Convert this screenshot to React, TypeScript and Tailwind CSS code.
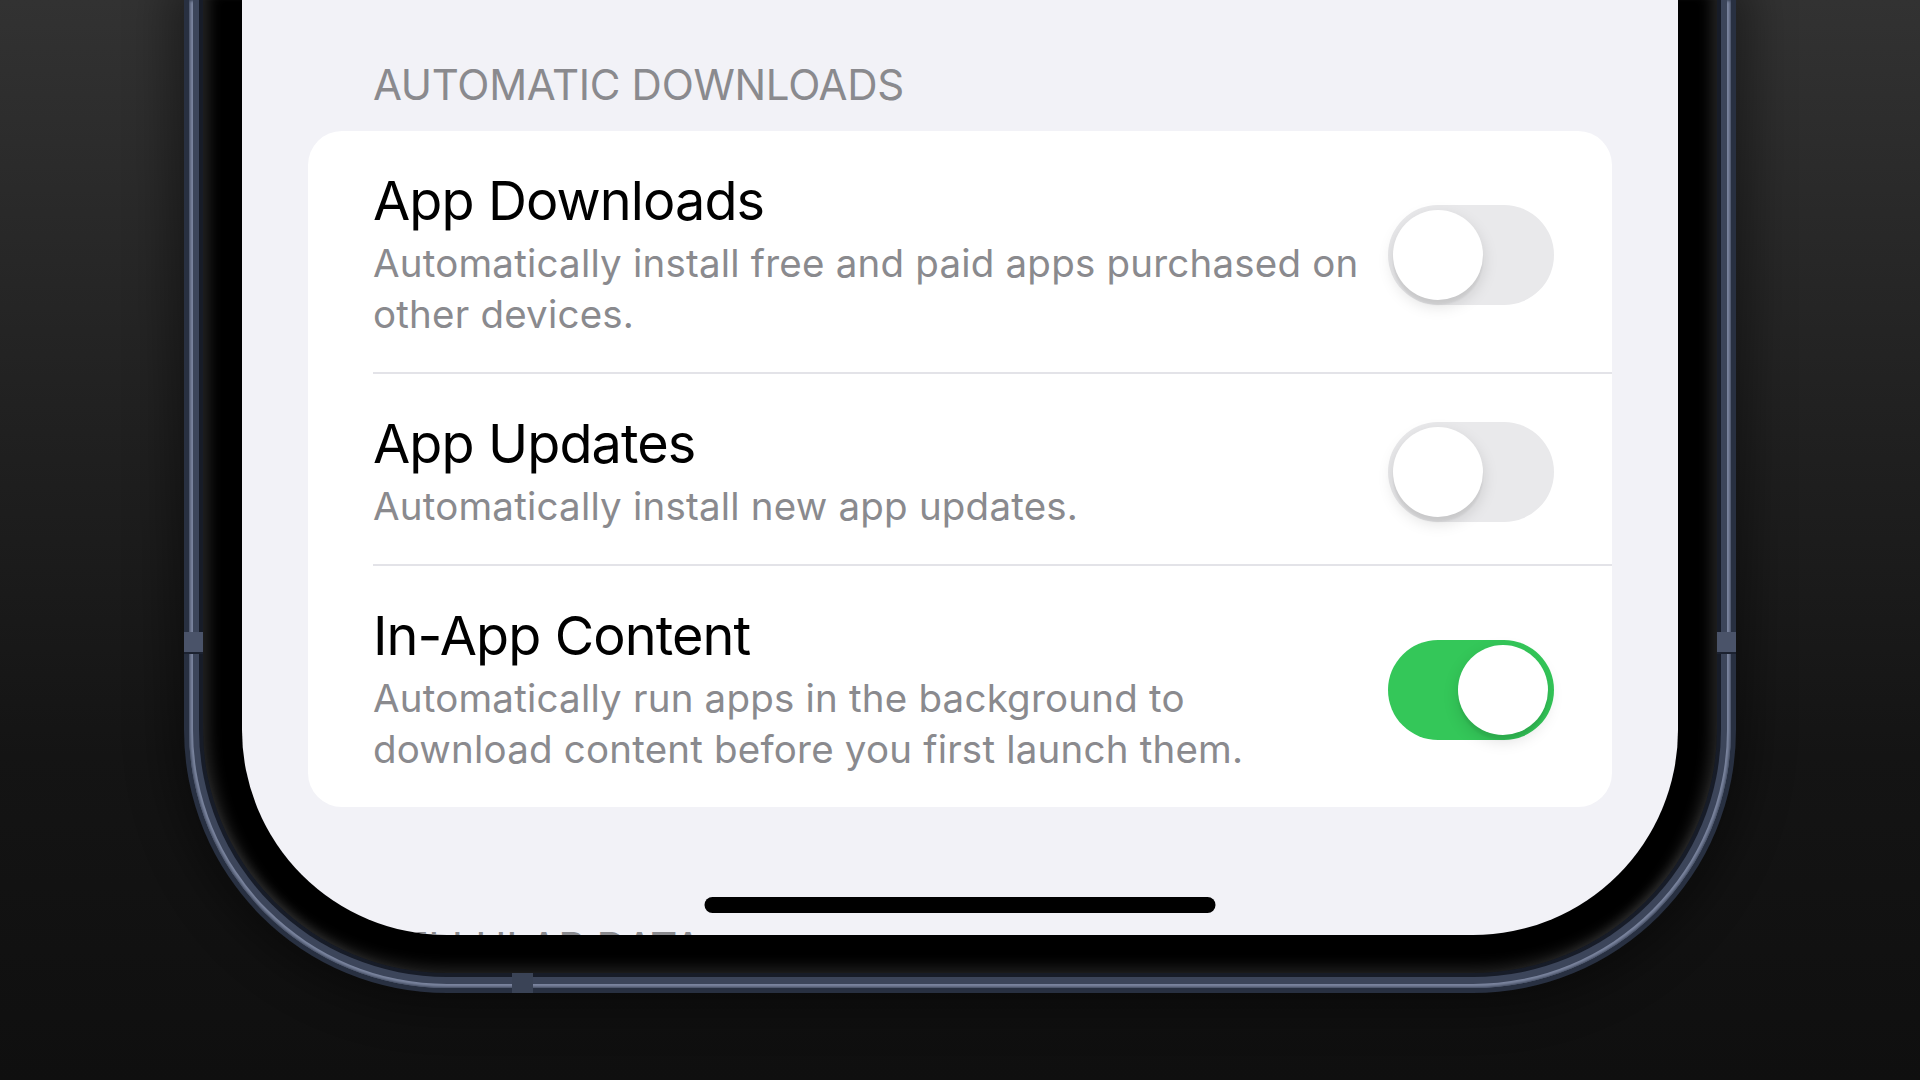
import React from "react";

type Setting = {
  title: string;
  lines: string[];
  on: boolean;
};

const settings: Setting[] = [
  {
    title: "App Downloads",
    lines: ["Automatically install free and paid apps purchased on", "other devices."],
    on: false,
  },
  {
    title: "App Updates",
    lines: ["Automatically install new app updates."],
    on: false,
  },
  {
    title: "In-App Content",
    lines: ["Automatically run apps in the background to", "download content before you first launch them."],
    on: true,
  },
];

const Toggle = ({ on }: { on: boolean }) => (
  <div
    className={`w-[166px] h-[100px] rounded-full flex items-center shrink-0 ${
      on ? "bg-[#34c759] justify-end pr-[6px]" : "bg-[#e9e9eb] justify-start pl-[5px]"
    }`}
  >
    <div className="w-[90px] h-[90px] rounded-full bg-white shadow-[0_6px_16px_rgba(0,0,0,0.13),0_5px_2px_rgba(0,0,0,0.05)]" />
  </div>
);

const SettingRow = ({ item, last }: { item: Setting; last: boolean }) => (
  <div className="pl-[65px]">
    <div
      className={`flex items-center pr-[58px] pt-[38px] pb-[32px] ${
        last ? "" : "border-b-2 border-[#e3e3e8]"
      }`}
    >
      <div className="flex-1">
        <div className="text-[54px] leading-[64px] text-black tracking-[-0.9px]">{item.title}</div>
        <div className="mt-[5px] text-[38.5px] leading-[51px] text-[#8a8a8e] tracking-[0.2px]">
          {item.lines.map((line, i) => (
            <div key={i}>{line}</div>
          ))}
        </div>
      </div>
      <Toggle on={item.on} />
    </div>
  </div>
);

export default function App() {
  return (
    <div className="w-[1920px] h-[1080px] overflow-hidden flex justify-center bg-[linear-gradient(to_bottom,#323232_0%,#222222_35%,#141414_70%,#0f0f0f_100%)] font-['Inter','Noto_Sans',sans-serif]">
      {/* phone frame: metal band, bezel, screen */}
      <div className="relative w-[1552px] self-start rounded-b-[263px] bg-[#283041] px-[5px] pb-[5px] shadow-[0_0_40px_18px_rgba(0,0,0,0.35)]">
        <div className="rounded-b-[258px] bg-[#7c86a0] px-[4px] pb-[4px] shadow-[inset_0_0_3px_1px_#3a4357]">
          <div className="rounded-b-[254px] bg-[#3c455a] px-[6px] pb-[7px]">
            <div className="rounded-b-[248px] bg-[#171c28] px-[4px] pb-[4px]">
              <div className="rounded-b-[244px] bg-black px-[39px] pb-[38px] shadow-[inset_16px_0_14px_-10px_rgba(255,255,255,0.14),inset_-16px_0_14px_-10px_rgba(255,255,255,0.14),inset_0_-16px_14px_-10px_rgba(255,255,255,0.12)]">
                <div className="relative h-[935px] rounded-b-[205px] bg-[#f2f2f7] overflow-hidden flex flex-col px-[66px]">
                  <div className="pl-[65px] pt-[60px] text-[42px] leading-[50px] text-[#8a8a8e] tracking-[-0.3px]">
                    AUTOMATIC DOWNLOADS
                  </div>
                  <div className="mt-[21px] bg-white rounded-[34px]">
                    {settings.map((item, i) => (
                      <SettingRow key={item.title} item={item} last={i === settings.length - 1} />
                    ))}
                  </div>
                  <div className="pl-[65px] mt-[116px] text-[42px] leading-[50px] text-[#8a8a8e] tracking-[-0.3px]">
                    CELLULAR DATA
                  </div>
                  {/* home indicator */}
                  <div className="absolute bottom-[22px] left-1/2 -translate-x-1/2 w-[511px] h-[16px] rounded-full bg-black" />
                </div>
              </div>
            </div>
          </div>
        </div>
        {/* antenna breaks on the band */}
        <div className="absolute left-0 top-[632px] w-[19px] h-[22px] bg-[#4a5369] border-b-2 border-[#1c2230]" />
        <div className="absolute right-0 top-[632px] w-[19px] h-[22px] bg-[#4a5369] border-b-2 border-[#1c2230]" />
        <div className="absolute bottom-0 left-[328px] w-[21px] h-[20px] bg-[#3a4356]" />
      </div>
    </div>
  );
}
